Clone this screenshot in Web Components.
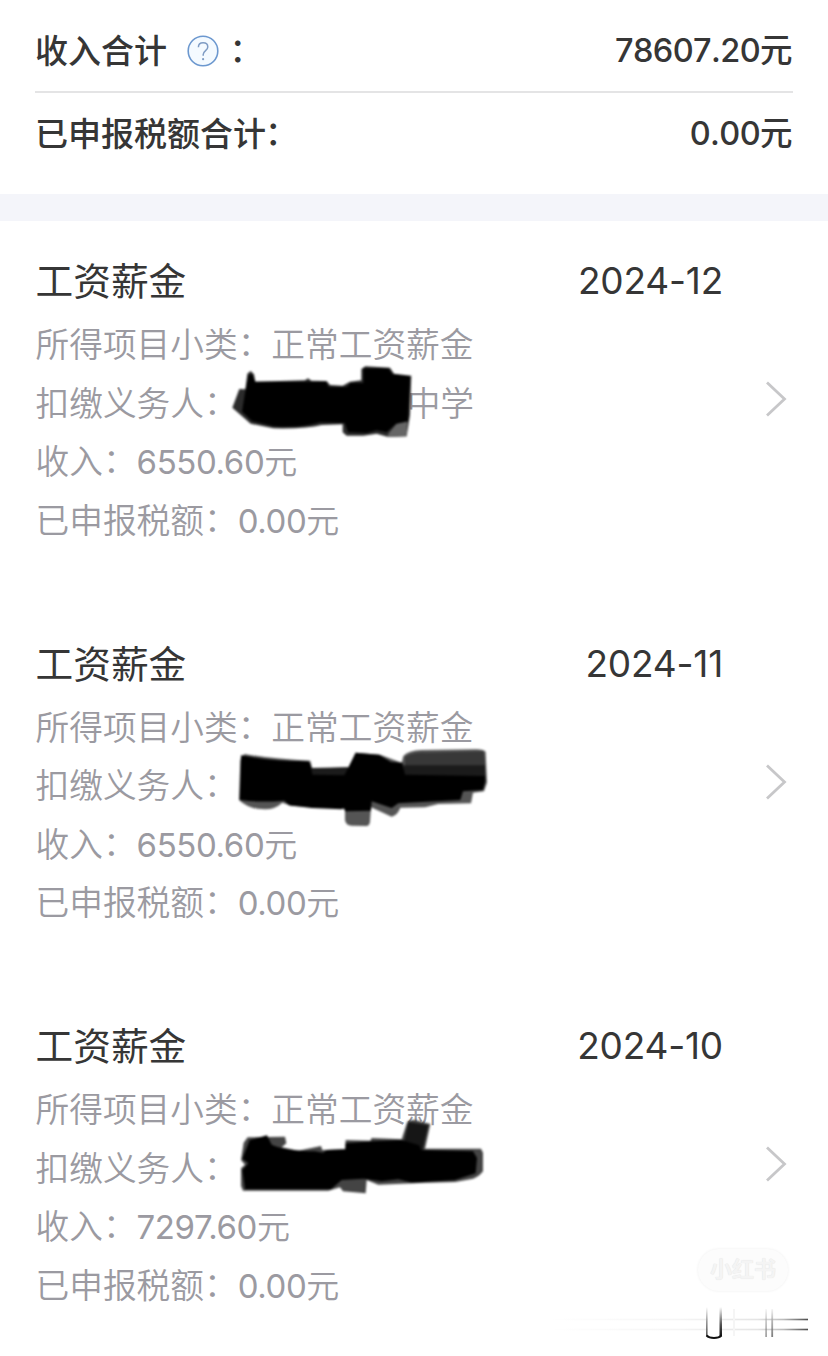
<!DOCTYPE html>
<html lang="zh-CN">
<head>
<meta charset="UTF-8">
<meta name="viewport" content="width=device-width, initial-scale=1">
<title>收入纳税明细</title>
<style>
    body {
        margin: 0;
        background: #fff;
        font-family: Inter, "Noto Sans CJK SC", sans-serif;
    }
</style>
</head>
<body>
<tax-page></tax-page>

<script>
class HelpIcon extends HTMLElement {
    constructor() {
        super();
        this.shadowDOM = this.attachShadow({ mode: 'open' });
        this.shadowDOM.innerHTML = `
        <style>
            :host {
                display: block;
                width: 32px;
                height: 32px;
            }
            svg {
                display: block;
            }
        </style>
        <svg width="32" height="32" viewBox="0 0 32 32" fill="none">
            <circle cx="16" cy="16" r="14.8" fill="#f4faff" stroke="#6c98cf" stroke-width="1.6"/>
            <path d="M11.4 12.2C11.4 9.4 13.4 7.7 16.1 7.7C18.9 7.7 20.8 9.4 20.8 11.9C20.8 15.5 16.2 15.8 16.2 19.6V20.8" stroke="#7f9cc4" stroke-width="1.5"/>
            <circle cx="16.1" cy="24.2" r="1.1" fill="#7f9cc4"/>
        </svg>
        `
    }
}
customElements.define("help-icon", HelpIcon);


class SummaryRow extends HTMLElement {
    constructor() {
        super();
        this.shadowDOM = this.attachShadow({ mode: 'open' });
        this.shadowDOM.innerHTML = `
        <style>
            :host {
                display: flex;
                justify-content: space-between;
                align-items: center;
                box-sizing: border-box;
                height: 82px;
                color: #363636;
                font-size: 33px;
                font-weight: 500;
                line-height: 48px;
                white-space: nowrap;
            }
            .label {
                display: flex;
                align-items: center;
            }
            .value {
                margin-right: 1px;
                font-size: 32.5px;
                font-kerning: none;
                letter-spacing: -0.6px;
            }
        </style>
        <div class="label"><slot></slot></div>
        <div class="value"><slot name="value"></slot></div>
        `
    }
}
customElements.define("summary-row", SummaryRow);


class DetailLine extends HTMLElement {
    constructor() {
        super();
        this.shadowDOM = this.attachShadow({ mode: 'open' });
        this.shadowDOM.innerHTML = `
        <style>
            :host {
                display: flex;
                align-items: center;
                height: 58.5px;
                color: #9b9aa1;
                font-size: 33.7px;
                font-weight: 350;
                line-height: 58px;
                white-space: nowrap;
            }
            .colon {
                line-height: 0;
                vertical-align: 1.5px;
            }
            .value {
                font-size: 33px;
            }
        </style>
        <span>${this.getAttribute('label')}<span class="colon">：</span></span>
        <span class="value"><slot></slot></span>
        `
    }
}
customElements.define("detail-line", DetailLine);


// Black marker strokes, drawn at three units per pixel
const strokes = {
    first: `
        <path fill="#2b2b2b" d="M37 158L58 102L76 103L82 56L92 48L102 58L106 80L255 76L264 70L274 77L320 78L330 90L368 92L390 80L424 76V42L436 34L510 38L522 56L574 62L570 180L560 244L505 246L470 236L430 242L380 242L368 232V208L305 210Q260 222 160 220L92 206Z"/>
        <path fill="#666" d="M500 246L510 230L530 206L562 200L560 244Z"/>
        <path fill="#000" d="M66 170L76 108L86 60L96 58L106 80H318L326 96H380L392 84H430V40L504 40L518 58L570 64L564 198L528 206L500 232L470 226L440 234L384 232L374 204L300 202Q240 220 160 214L96 198Z"/>`,
    second: `
        <path fill="#555" d="M42 180Q70 208 120 208Q150 208 172 188L200 198L360 205V240Q362 257 380 257L424 258Q434 257 435 245L438 202L500 230Q518 225 526 203L600 202L640 192L738 190L744 158L777 154L786 128L782 36Q776 27 750 28L590 30Q550 32 535 48L530 68L465 44L392 38L370 82L262 86L256 62Q150 58 58 42L46 60Z"/>
        <path fill="#383838" d="M540 50Q570 36 600 38L776 34L784 126H540Z"/>
        <path fill="#1b1b1b" d="M258 84L370 82V208L268 200ZM535 76H780V128H535Z"/>
        <path fill="#000" d="M48 46Q150 65 250 64Q258 70 262 104L358 106L374 76L392 38L462 44L498 66L532 68L540 104L780 108V128L774 150L714 154L706 180L520 190L500 204L440 184L438 212L360 214L356 200L350 208L260 204L192 196L178 182Q100 188 44 180Z"/>`,
    third: `
        <path fill="#444" d="M68 82L180 80L184 100L170 112L220 122L288 108L292 120L360 118L362 90L436 92L440 84L530 88L546 38Q550 28 570 30L616 42L600 116L768 116L774 128V184Q760 202 744 206L690 216L600 218L460 224L425 210L422 250L354 244L345 232L310 242L54 242L48 228V175L60 164L48 150L56 98Z"/>
        <path fill="#161616" d="M550 36L610 46L592 122L532 118Z"/>
        <path fill="#000" d="M74 90L126 76L140 104Q180 122 270 124L294 128L306 120L362 118V100L440 94L530 90L582 106L588 120L744 124L756 144L752 190L690 210L600 216L560 218L520 208L470 214L416 206L350 210L318 238H60L52 180L70 160L52 146Z"/>`
};

class MarkerStroke extends HTMLElement {
    constructor() {
        super();
        this.shadowDOM = this.attachShadow({ mode: 'open' });
        this.shadowDOM.innerHTML = `
        <style>
            :host {
                display: block;
                position: absolute;
                width: 275px;
                height: 95px;
            }
            svg {
                display: block;
                overflow: visible;
            }
            g {
                filter: blur(3px);
            }
        </style>
        <svg width="275" height="95" viewBox="0 0 825 285"><g>${strokes[this.getAttribute('shape')]}</g></svg>
        `
    }
}
customElements.define("marker-stroke", MarkerStroke);


class IncomeRecord extends HTMLElement {
    constructor() {
        super();
        this.shadowDOM = this.attachShadow({ mode: 'open' });
    }

    set record(record) {
        this._record = record;
        this.render();
    }

    render() {
        const { month, income, employer, shape, x, y } = this._record;
        this.shadowDOM.innerHTML = `
        <style>
            :host {
                display: flex;
                flex-direction: column;
                position: relative;
                box-sizing: border-box;
                height: 382.5px;
                padding: 28px 36px 0 35.5px;
            }
            .heading {
                display: flex;
                justify-content: space-between;
                align-items: center;
                height: 64px;
                padding-right: 69px;
                color: #363636;
                font-size: 37.7px;
                line-height: 60px;
            }
            .month {
                font-size: 37px;
                letter-spacing: -0.2px;
            }
            .content {
                display: flex;
                justify-content: space-between;
                margin-top: 3px;
            }
            .arrow {
                margin: 64px 5px 0 0;
                width: 22px;
                height: 38px;
            }
            .gap {
                display: inline-block;
                width: 169px;
            }
            .number {
                font-weight: 400;
                letter-spacing: -0.4px;
            }
            .employer {
                font-size: 33.7px;
            }
            marker-stroke {
                left: ${x}px;
                top: ${y}px;
            }
        </style>
        <div class="heading">
            <span>工资薪金</span>
            <span class="month">${month}</span>
        </div>
        <div class="content">
            <div>
                <detail-line label="所得项目小类"><span class="employer">正常工资薪金</span></detail-line>
                <detail-line label="扣缴义务人"><span class="gap"></span><span class="employer">${employer}</span></detail-line>
                <detail-line label="收入"><span class="number">${income}</span>元</detail-line>
                <detail-line label="已申报税额"><span class="number">0.00</span>元</detail-line>
            </div>
            <svg class="arrow" viewBox="0 0 22 38" fill="none">
                <path d="M2 2.5L19.5 19L2 35.5" stroke="#c7c7c9" stroke-width="2.8"/>
            </svg>
        </div>
        <marker-stroke shape="${shape}"></marker-stroke>
        `
    }
}
customElements.define("income-record", IncomeRecord);


class AppWatermark extends HTMLElement {
    constructor() {
        super();
        this.shadowDOM = this.attachShadow({ mode: 'open' });
        this.shadowDOM.innerHTML = `
        <style>
            :host {
                display: block;
                position: absolute;
                left: 540px;
                top: 1249px;
                width: 288px;
                height: 107px;
            }
            .badge {
                margin-left: 158px;
                width: 90px;
                height: 42px;
                border-radius: 21px;
                background: #fcfcfc;
                box-shadow: 0 0 3px #eee;
                color: #f4f4f4;
                font-size: 22px;
                font-weight: 700;
                line-height: 40px;
                text-align: center;
                text-shadow: 0 0 1px #ddd;
            }
            svg {
                display: block;
            }
        </style>
        <div class="badge">小红书</div>
        <svg width="288" height="65" viewBox="540 1291 288 65" fill="none">
            <defs>
                <linearGradient id="line" x1="548" x2="810" y1="0" y2="0" gradientUnits="userSpaceOnUse">
                    <stop stop-color="#fff"/>
                    <stop offset=".5" stop-color="#f5f5f5"/>
                    <stop offset=".8" stop-color="#e4e4e4"/>
                    <stop offset=".9" stop-color="#bbb"/>
                    <stop offset="1" stop-color="#444"/>
                </linearGradient>
                <linearGradient id="side" x1="0" x2="0" y1="1307" y2="1336" gradientUnits="userSpaceOnUse">
                    <stop stop-color="#fff"/>
                    <stop offset=".5" stop-color="#999"/>
                    <stop offset="1" stop-color="#555"/>
                </linearGradient>
                <linearGradient id="dark" x1="0" x2="0" y1="1307" y2="1336" gradientUnits="userSpaceOnUse">
                    <stop stop-color="#fff"/>
                    <stop offset=".6" stop-color="#555"/>
                    <stop offset="1" stop-color="#111"/>
                </linearGradient>
            </defs>
            <rect x="548" y="1318.7" width="260" height="1.6" fill="url(#line)"/>
            <rect x="548" y="1328.7" width="260" height="1.6" fill="url(#line)"/>
            <rect x="708" y="1308" width="12" height="28" fill="#fff"/>
            <rect x="706" y="1307" width="1.6" height="29" fill="url(#side)"/>
            <rect x="719.5" y="1307" width="2.5" height="29" fill="url(#dark)"/>
            <path d="M706.5 1335.5Q709 1338 714 1338T721.5 1335.5" stroke="#111" stroke-width="2"/>
            <rect x="765.3" y="1309" width="1.6" height="28" fill="url(#side)" opacity=".6"/>
            <rect x="771.3" y="1309" width="1.8" height="28" fill="url(#side)" opacity=".75"/>
            <rect x="733" y="1309" width="2" height="27" fill="#f5f5f5"/>
        </svg>
        `
    }
}
customElements.define("app-watermark", AppWatermark);


const records = [
    { month: '2024-12', income: '6550.60', employer: '中学', shape: 'first', x: 220, y: 134 },
    { month: '2024-11', income: '6550.60', employer: '', shape: 'second', x: 225, y: 136.5 },
    { month: '2024-10', income: '7297.60', employer: '', shape: 'third', x: 225, y: 124 }
];

class TaxPage extends HTMLElement {
    constructor() {
        super();
        this.shadowDOM = this.attachShadow({ mode: 'open' });
        this.render();
    }

    render() {
        this.shadowDOM.innerHTML = `
        <style>
            :host {
                display: block;
                position: relative;
                height: 1356px;
                overflow: hidden;
            }
            .summary {
                box-sizing: border-box;
                height: 194px;
                padding: 11px 35px 0;
            }
            .summary summary-row:first-child {
                border-bottom: 2px solid #e4e4e5;
            }
            .divider {
                height: 27px;
                background: #f4f5fa;
            }
            help-icon {
                margin: 0 12px 0 19.5px;
            }
            .colon {
                margin-left: -1px;
                padding-bottom: 3px;
            }
        </style>
        <div class="summary">
            <summary-row>收入合计<help-icon></help-icon><span class="colon">：</span><span slot="value">78607.20元</span></summary-row>
            <summary-row>已申报税额合计<span class="colon">：</span><span slot="value">0.00元</span></summary-row>
        </div>
        <div class="divider"></div>
        <div class="list"></div>
        <app-watermark></app-watermark>
        `
        const list = this.shadowDOM.querySelector('.list');
        records.forEach(record => {
            const recordElement = document.createElement('income-record');
            recordElement.record = record;
            list.appendChild(recordElement);
        });
    }
}
customElements.define("tax-page", TaxPage);
</script>
</body>
</html>
